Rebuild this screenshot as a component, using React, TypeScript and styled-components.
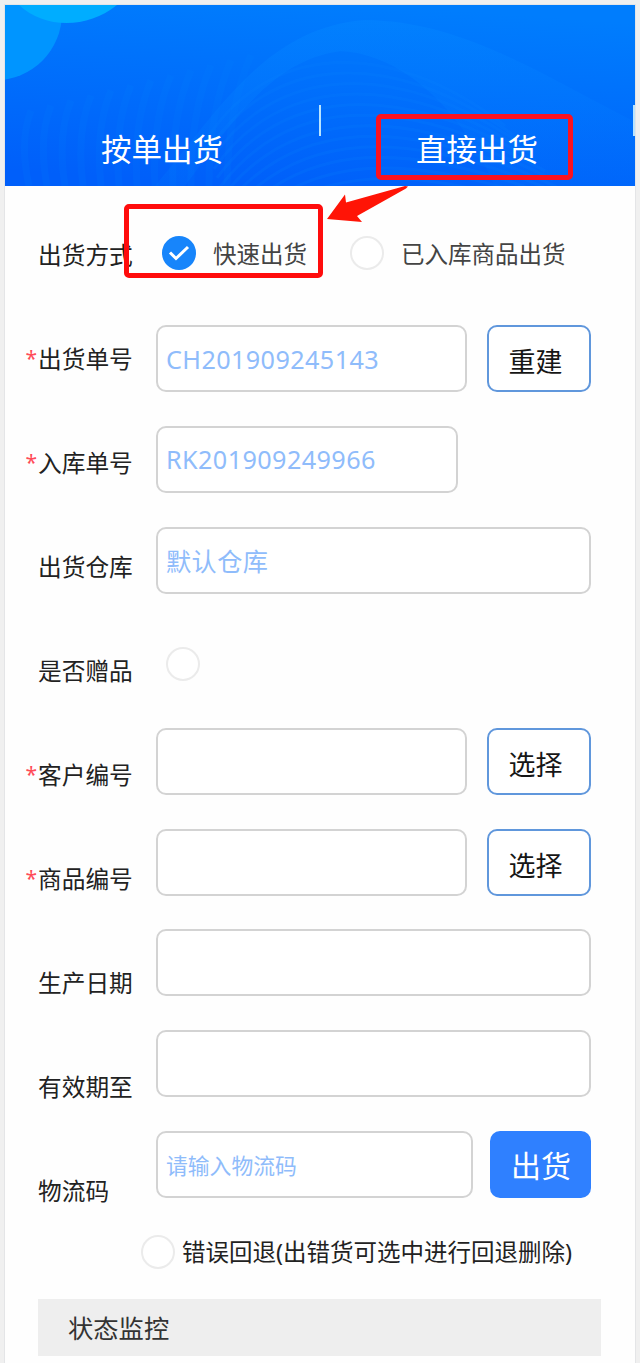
import React, { useState } from "react";
import styled, { createGlobalStyle } from "styled-components";

const labels = [
  { text: "出货方式", required: false },
  { text: "出货单号", required: true },
  { text: "入库单号", required: true },
  { text: "出货仓库", required: false },
  { text: "是否赠品", required: false },
  { text: "客户编号", required: true },
  { text: "商品编号", required: true },
  { text: "生产日期", required: false },
  { text: "有效期至", required: false },
  { text: "物流码", required: false },
];

const App = () => {
  const [mode, setMode] = useState("quick");
  const [gift, setGift] = useState(false);
  const [rollback, setRollback] = useState(false);

  return (
    <Page>
      <GlobalStyle />
      <Panel>
        <Header>
          <Waves />
          <Tab>
            <span>按单出货</span>
          </Tab>
          <Tab>
            <span>直接出货</span>
            <TabMark />
          </Tab>
        </Header>

        <Form>
          <Labels>
            {labels.map((label) => (
              <Label key={label.text}>
                <Star>{label.required ? "*" : ""}</Star>
                {label.text}
              </Label>
            ))}
          </Labels>

          <Fields>
            <Modes>
              <Option>
                <Circle $on={mode === "quick"} onClick={() => setMode("quick")}>
                  {mode === "quick" && <Check />}
                </Circle>
                快速出货
                <ModeMark />
                <Arrow />
              </Option>
              <Option>
                <Circle $on={mode === "stock"} onClick={() => setMode("stock")}>
                  {mode === "stock" && <Check />}
                </Circle>
                已入库商品出货
              </Option>
            </Modes>
            <Row>
              <Input $width={311} defaultValue="CH201909245143" />
              <Button>重建</Button>
            </Row>
            <Row>
              <Input $width={302} defaultValue="RK201909249966" />
            </Row>
            <Row>
              <Input $width={435} defaultValue="默认仓库" />
            </Row>
            <Row>
              <GiftCircle $on={gift} onClick={() => setGift(!gift)}>
                {gift && <Check />}
              </GiftCircle>
            </Row>
            <Row>
              <Input $width={311} />
              <Button>选择</Button>
            </Row>
            <Row>
              <Input $width={311} />
              <Button>选择</Button>
            </Row>
            <Row>
              <Input $width={435} />
            </Row>
            <Row>
              <Input $width={435} />
            </Row>
            <Row>
              <Input $width={317} placeholder="请输入物流码" />
              <Button $primary>出货</Button>
            </Row>
          </Fields>
        </Form>

        <Rollback>
          <Circle $on={rollback} onClick={() => setRollback(!rollback)}>
            {rollback && <Check />}
          </Circle>
          <span>错误回退(出错货可选中进行回退删除)</span>
        </Rollback>
        <Status>状态监控</Status>
      </Panel>
    </Page>
  );
};

const Check = () => (
  <svg width="22" height="18" viewBox="0 0 22 18" fill="none">
    <path d="M2 8.5l6 6L20 3" stroke="#fff" strokeWidth="3" />
  </svg>
);

const Arrow = () => (
  <ArrowSvg width="84" height="40" viewBox="0 0 84 40">
    <path d="M1 34L19 9.500L20 17.500L79 1L82 1.500L80 3.500L31 31L36 37Z" fill="#ff1406" />
  </ArrowSvg>
);

const Waves = () => (
  <WavesSvg viewBox="0 0 630 180" preserveAspectRatio="none">
    <defs>
      <linearGradient id="sky" x1="0.6" y1="0" x2="0.35" y2="1">
        <stop offset="0" stopColor="#007dfd" />
        <stop offset="1" stopColor="#005ffa" />
      </linearGradient>
      <linearGradient id="hill" x1="0" y1="0" x2="0" y2="1">
        <stop offset="0" stopColor="#0384ff" />
        <stop offset="1" stopColor="#0068fb" />
      </linearGradient>
    </defs>
    <rect width="630" height="180" fill="url(#sky)" />
    <path
      d="M150 180C210 110 260 22 360 15C460 16 540 72 630 116V180H490C460 110 400 48 335 46C265 55 225 120 180 180Z"
      fill="url(#hill)"
      opacity="0.6"
    />
    <g fill="none" stroke="#0a83ff" strokeWidth="3" opacity="0.18">
      {Array.from({ length: 14 }, (_, i) => (
        <path
          key={i}
          d={`M${200 + i * 3} ${136 + i * 9}C${260 + i * 4} ${40 + i * 11} ${380 + i * 2} ${28 + i * 11} ${500 + i * 8} ${120 + i * 9}`}
        />
      ))}
    </g>
    <g fill="none" stroke="#0787ff" strokeWidth="7" opacity="0.12">
      {Array.from({ length: 12 }, (_, i) => (
        <path key={i} d={`M${24 + i * 18} 180Q${14 + i * 19} ${135 - i * 3} ${26 + i * 20} ${105 - i * 5}`} />
      ))}
    </g>
    <circle cx="-10" cy="8" r="67" fill="#0095ff" />
    <path d="M14 0C40 24 82 24 112 0Z" fill="#00adff" />
  </WavesSvg>
);

const GlobalStyle = createGlobalStyle`
  * {
    box-sizing: border-box;
  }

  body {
    margin: 0;
    background: #f0f0f0;
  }

  body, input, button {
    font-family: "Noto Sans", "Noto Sans CJK SC", sans-serif;
  }
`;

const Page = styled.div`
  height: 1363px;
  padding: 5px 5px 0;
  overflow: hidden;
  background: #f0f0f0;
`;

const Panel = styled.main`
  height: 1358px;
  background: #fefefe;
  box-shadow: 0 0 0 1px #e4e5e7;
`;

const Header = styled.header`
  position: relative;
  display: flex;
  height: 181px;
  padding-top: 100px;
`;

const WavesSvg = styled.svg`
  position: absolute;
  inset: 0;
  width: 100%;
  height: 100%;
`;

const Tab = styled.div`
  position: relative;
  display: flex;
  flex: 1;
  justify-content: center;
  height: 31px;
  padding-top: 23px;
  border-right: 2px solid #b9e4ff;
  color: #fff;
  font-size: 30.5px;
  line-height: 42px;
  white-space: nowrap;

  &:first-of-type {
    flex: 0 0 316px;
  }
`;

const Mark = styled.div`
  position: absolute;
  border: 5px solid #ff0c0c;
  border-radius: 5px;
  pointer-events: none;
`;

const TabMark = styled(Mark)`
  top: 9px;
  left: 55px;
  width: 197px;
  height: 66px;
  border-color: #fb1220;
`;

const ModeMark = styled(Mark)`
  top: -32px;
  left: -38px;
  width: 199px;
  height: 74px;
`;

const ArrowSvg = styled.svg`
  position: absolute;
  top: -51px;
  left: 164px;
  pointer-events: none;
`;

const Form = styled.section`
  display: flex;
  height: 1046px;
  padding-top: 16px;
`;

const Labels = styled.div`
  width: 151px;
`;

const Label = styled.div`
  display: flex;
  align-items: center;
  height: 104px;
  color: #222;
  font-size: 23.7px;
`;

const Star = styled.span`
  width: 33px;
  padding: 0 1px 0 0;
  color: #ff4b58;
  font-size: 21px;
  text-align: right;
`;

const Fields = styled.div`
  flex: 1;
  padding-top: 34px;
`;

const Modes = styled.div`
  display: flex;
  gap: 43px;
  height: 89.300px;
  padding-left: 6px;
`;

const Option = styled.div`
  position: relative;
  display: flex;
  align-items: center;
  gap: 17px;
  height: 34px;
  color: #444;
  font-size: 23.5px;
  white-space: nowrap;
`;

const Circle = styled.button<{ $on: boolean }>`
  display: flex;
  flex: none;
  align-items: center;
  justify-content: center;
  width: 34px;
  height: 34px;
  padding: 0;
  border: 2px solid ${(p) => (p.$on ? "#1785fb" : "#ebebeb")};
  border-radius: 50%;
  background: ${(p) => (p.$on ? "#1785fb" : "#fff")};
`;

const GiftCircle = styled(Circle)`
  margin: 20px 0 0 10px;
`;

const Row = styled.div`
  display: flex;
  justify-content: space-between;
  width: 435px;
  height: 100.700px;
`;

const Input = styled.input<{ $width: number }>`
  width: ${(p) => p.$width}px;
  height: 67px;
  padding: 0 8px;
  border: 2px solid #d3d3d3;
  border-radius: 10px;
  outline: none;
  background: #fff;
  color: #8fbcfb;
  font-size: 25.2px;
  letter-spacing: 0.4px;

  &::placeholder {
    color: #8fbcfb;
    font-size: 21.8px;
    letter-spacing: 0;
  }
`;

const Button = styled.button<{ $primary?: boolean }>`
  width: ${(p) => (p.$primary ? 101 : 104)}px;
  height: 67px;
  padding: ${(p) => (p.$primary ? "0 0 0 1px" : "4px 7px 0 0")};
  border: ${(p) => (p.$primary ? "none" : "2px solid #6097dc")};
  border-radius: 10px;
  background: ${(p) => (p.$primary ? "#2f80ff" : "#fff")};
  color: ${(p) => (p.$primary ? "#fff" : "#161616")};
  font-size: ${(p) => (p.$primary ? 30 : 27)}px;
`;

const Rollback = styled.div`
  display: flex;
  align-items: center;
  gap: 7px;
  height: 40px;
  padding-left: 136px;
  color: #222;
  font-size: 23.5px;
  white-space: nowrap;

  span {
    padding-bottom: 3px;
  }
`;

const Status = styled.div`
  height: 57px;
  margin: 27px 34px 0 33px;
  padding-left: 30px;
  background: #eee;
  color: #333;
  font-size: 25.3px;
  line-height: 58px;
`;

export default App;
